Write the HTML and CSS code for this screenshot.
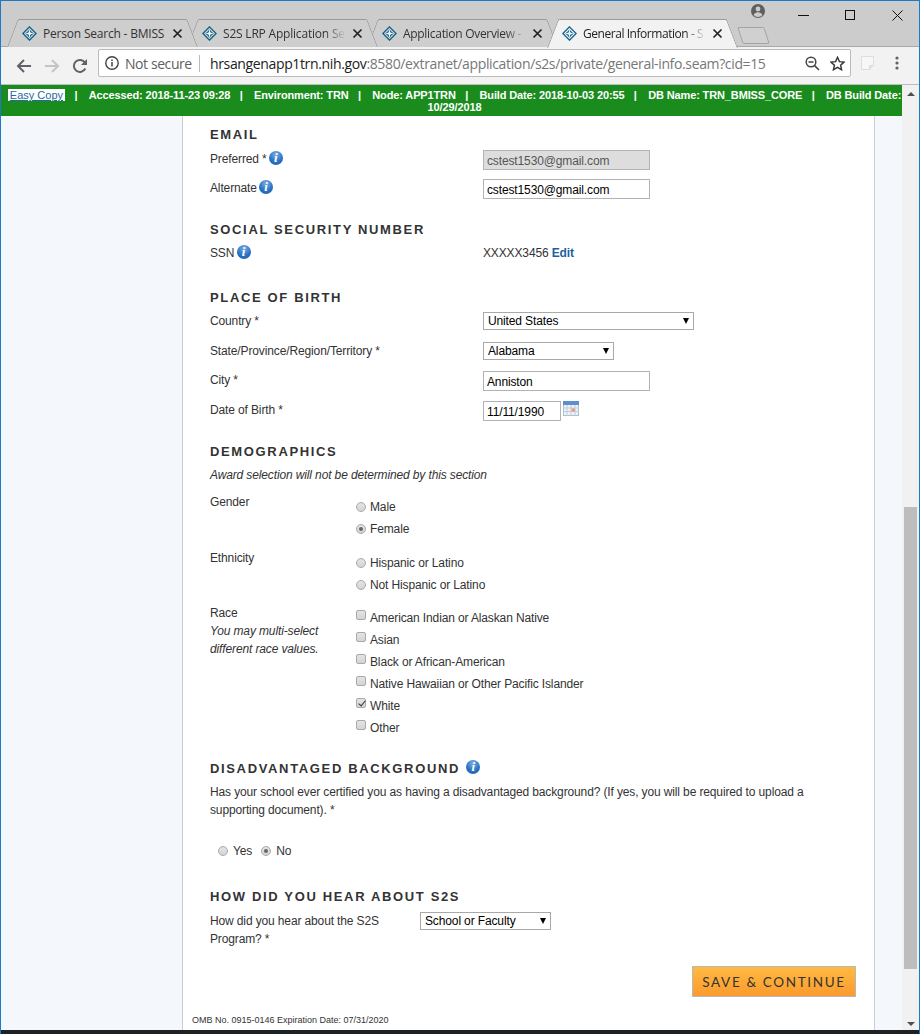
FILE: index.html
```html
<!DOCTYPE html>
<html lang="en">
<head>
<meta charset="utf-8">
<title>General Information - S2S</title>
<link rel="stylesheet" href="styles.css">
</head>
<body>
<svg class="defs" width="0" height="0" aria-hidden="true">
  <symbol id="fav" viewBox="0 0 16 16">
    <path d="M8 .9 15.1 8 8 15.1.9 8Z" fill="none" stroke="#0f5f86" stroke-width="1.4"/>
    <path d="M8 3.6 12.4 8 8 12.4 3.6 8Z" fill="#1a6f96"/>
    <path d="M4.6 8h6.8M8 4.6v6.8" stroke="#fff" stroke-width="1.1"/>
    <path d="M6 6.2 8 8l2-1.8M6 9.8 8 8l2 1.8" fill="none" stroke="#cfe6f0" stroke-width=".8"/>
  </symbol>
  <symbol id="x" viewBox="0 0 11 11">
    <path d="M1.5 1.5l8 8m0-8l-8 8" stroke="#222" stroke-width="1.7" fill="none"/>
  </symbol>
</svg>
<div class="window">
  <header class="tabstrip">
    <div class="tabs">
      <div class="tab"><svg class="fav"><use href="#fav"/></svg><span class="tab-title">Person Search - BMISS</span><svg class="tab-x"><use href="#x"/></svg></div>
      <div class="tab"><svg class="fav"><use href="#fav"/></svg><span class="tab-title fade">S2S LRP Application Se</span><svg class="tab-x"><use href="#x"/></svg></div>
      <div class="tab"><svg class="fav"><use href="#fav"/></svg><span class="tab-title fade">Application Overview -</span><svg class="tab-x"><use href="#x"/></svg></div>
      <div class="tab tab-active"><svg class="fav"><use href="#fav"/></svg><span class="tab-title fade">General Information - S</span><svg class="tab-x"><use href="#x"/></svg></div>
      <div class="newtab"></div>
    </div>
    <div class="winctl">
      <svg class="profile" width="14" height="14" viewBox="0 0 14 14"><circle cx="7" cy="7" r="7" fill="#5f5f5f"/><circle cx="7" cy="5" r="2.4" fill="#ccc"/><path d="M2.6 11c.8-2 2.6-2.8 4.4-2.8s3.6.8 4.4 2.8c-1 1.2-2.6 2-4.4 2s-3.4-.8-4.4-2Z" fill="#ccc"/></svg>
      <svg class="ctl-min" width="11" height="11" viewBox="0 0 11 11"><path d="M0 5.5h11" stroke="#111" stroke-width="1"/></svg>
      <svg class="ctl-max" width="10" height="10" viewBox="0 0 10 10"><rect x=".5" y=".5" width="9" height="9" fill="none" stroke="#111"/></svg>
      <svg class="ctl-close" width="11" height="11" viewBox="0 0 11 11"><path d="M.5.5l10 10m0-10l-10 10" stroke="#111" stroke-width="1" fill="none"/></svg>
    </div>
  </header>

  <div class="toolbar">
    <span class="navbtn"><svg width="16" height="14" viewBox="0 0 16 14"><path d="M15 7H2.5M8 1 2 7l6 6" fill="none" stroke="#5f6368" stroke-width="2"/></svg></span>
    <span class="navbtn"><svg width="16" height="14" viewBox="0 0 16 14"><path d="M1 7h12.5M8 1l6 6-6 6" fill="none" stroke="#c4c4c4" stroke-width="2"/></svg></span>
    <span class="navbtn"><svg width="16" height="16" viewBox="0 0 16 16"><path d="M13.3 10.5A6 6 0 1 1 13 4.8" fill="none" stroke="#5f6368" stroke-width="2"/><path d="M15 1v6H9Z" fill="#5f6368"/></svg></span>
    <div class="omnibox">
      <svg class="omni-info" width="14" height="14" viewBox="0 0 14 14"><circle cx="7" cy="7" r="6.2" fill="none" stroke="#444" stroke-width="1.4"/><path d="M7 6v4.4M7 3.4v1.5" stroke="#444" stroke-width="1.5"/></svg>
      <span class="notsecure">Not secure</span>
      <span class="omni-div"></span>
      <span class="url"><span class="host">hrsangenapp1trn.nih.gov</span>:8580/extranet/application/s2s/private/general-info.seam?cid=15</span>
      <svg class="lens" width="15" height="15" viewBox="0 0 15 15"><circle cx="6" cy="6" r="4.8" fill="none" stroke="#444" stroke-width="1.5"/><path d="M9.6 9.6 14 14M3.5 6h5" stroke="#444" stroke-width="1.5"/></svg>
      <svg class="star" width="15" height="15" viewBox="0 0 15 15"><path d="M7.5 1.3 9.4 5.6l4.7.5-3.5 3.1 1 4.6-4.1-2.4-4.1 2.4 1-4.6L.9 6.1l4.7-.5Z" fill="none" stroke="#333" stroke-width="1.4"/></svg>
    </div>
    <svg class="ext" width="15" height="16" viewBox="0 0 15 16"><path d="M1.5 1.5h12v9l-4 4h-8Z" fill="#f7f7f7" stroke="#ddd"/><path d="M13.5 10.5h-4v4" fill="#e4e4e4" stroke="#ddd"/></svg>
    <svg class="dots" width="4" height="14" viewBox="0 0 4 14"><circle cx="2" cy="2" r="1.6" fill="#5f6368"/><circle cx="2" cy="7" r="1.6" fill="#5f6368"/><circle cx="2" cy="12" r="1.6" fill="#5f6368"/></svg>
  </div>

  <div class="viewport">
    <div class="page">
      <div class="envbar"><a class="easycopy" href="#">Easy Copy</a><span class="sep">|</span>Accessed: 2018-11-23 09:28<span class="sep">|</span>Environment: TRN<span class="sep">|</span>Node: APP1TRN<span class="sep">|</span>Build Date: 2018-10-03 20:55<span class="sep">|</span>DB Name: TRN_BMISS_CORE<span class="sep">|</span>DB Build Date:<br>10/29/2018</div>
      <div class="columns">
        <div class="gutter gutter-left"></div>
        <main class="content">
          <h2 class="title t-email">EMAIL</h2>
          <div class="row r-pref"><label class="lab">Preferred * <i class="info">i</i></label><input class="text text-wide is-disabled" value="cstest1530@gmail.com" disabled></div>
          <div class="row r-alt"><label class="lab">Alternate <i class="info">i</i></label><input class="text text-wide" value="cstest1530@gmail.com"></div>

          <h2 class="title t-ssn">SOCIAL SECURITY NUMBER</h2>
          <div class="row r-ssn"><label class="lab">SSN <i class="info">i</i></label><span class="val">XXXXX3456 <a class="edit" href="#">Edit</a></span></div>

          <h2 class="title t-place">PLACE OF BIRTH</h2>
          <div class="row r-country"><label class="lab">Country *</label><span class="sel sel-country"><select><option>United States</option></select></span></div>
          <div class="row r-state"><label class="lab">State/Province/Region/Territory *</label><span class="sel sel-state"><select><option>Alabama</option></select></span></div>
          <div class="row r-city"><label class="lab">City *</label><input class="text text-wide" value="Anniston"></div>
          <div class="row r-dob"><label class="lab">Date of Birth *</label><input class="text text-date" value="11/11/1990">
            <svg class="cal" width="16" height="15" viewBox="0 0 16 15"><rect x=".5" y=".5" width="15" height="14" fill="#eef3f8" stroke="#a9bdd3"/><rect x="0" y="0" width="16" height="4" fill="#5b8fd0"/><path d="M0 7h16M0 10.5h16M4 4v11M8 4v11M12 4v11" stroke="#c2ccd8"/><rect x="8.5" y="7.5" width="3.5" height="3" fill="#ec9a7c"/></svg>
          </div>

          <h2 class="title t-demo">DEMOGRAPHICS</h2>
          <p class="note">Award selection will not be determined by this section</p>
          <div class="group g-gender">
            <div class="lab-block">Gender</div>
            <div class="opts">
              <label class="opt"><input type="radio" name="g" disabled>Male</label>
              <label class="opt"><input type="radio" name="g" checked disabled>Female</label>
            </div>
          </div>
          <div class="group g-eth">
            <div class="lab-block">Ethnicity</div>
            <div class="opts">
              <label class="opt"><input type="radio" name="e" disabled>Hispanic or Latino</label>
              <label class="opt"><input type="radio" name="e" disabled>Not Hispanic or Latino</label>
            </div>
          </div>
          <div class="group g-race">
            <div class="lab-block">Race<br><em>You may multi-select<br>different race values.</em></div>
            <div class="opts">
              <label class="opt"><input type="checkbox" disabled>American Indian or Alaskan Native</label>
              <label class="opt"><input type="checkbox" disabled>Asian</label>
              <label class="opt"><input type="checkbox" disabled>Black or African-American</label>
              <label class="opt"><input type="checkbox" disabled>Native Hawaiian or Other Pacific Islander</label>
              <label class="opt"><input type="checkbox" checked disabled>White</label>
              <label class="opt"><input type="checkbox" disabled>Other</label>
            </div>
          </div>

          <h2 class="title t-dis">DISADVANTAGED BACKGROUND <i class="info info-title">i</i></h2>
          <p class="para">Has your school ever certified you as having a disadvantaged background? (If yes, you will be required to upload a supporting document). *</p>
          <div class="yesno">
            <label class="opt"><input type="radio" name="d" disabled>Yes</label>
            <label class="opt"><input type="radio" name="d" checked disabled>No</label>
          </div>

          <h2 class="title t-how">HOW DID YOU HEAR ABOUT S2S</h2>
          <div class="row r-how"><label class="lab lab-how">How did you hear about the S2S Program? *</label><span class="sel sel-how"><select><option>School or Faculty</option></select></span></div>

          <div class="actions"><button class="save" type="button">SAVE &amp; CONTINUE</button></div>
          <footer class="omb">OMB No. 0915-0146 Expiration Date: 07/31/2020</footer>
        </main>
        <div class="gutter gutter-right"></div>
      </div>
    </div>
    <div class="scrollbar">
      <span class="arrow arrow-up"></span>
      <div class="thumb"></div>
      <span class="arrow arrow-down"></span>
    </div>
  </div>
  <div class="taskbar"></div>
</div>
</body>
</html>
```
FILE: styles.css
```css
* { box-sizing: border-box; }
html, body { margin: 0; padding: 0; background: #fff; }
.defs { position: absolute; }
body { font-family: "Liberation Sans", Arial, sans-serif; font-size: 12px; color: #333; letter-spacing: -.13px; }

.window {
  width: 920px; height: 1034px; overflow: hidden;
  display: flex; flex-direction: column;
  border: 1px solid #1b7ac6; border-bottom: 0;
  background: #ccc;
}

/* tab strip */
.tabstrip { height: 46px; flex: none; display: flex; background: #ccc; border-bottom: 1px solid #a8a8a8; }
.tabs { display: flex; width: 745px; flex: none; padding: 18px 0 0 6px; height: 46px; }
.tab {
  position: relative; flex: none; width: 191px; height: 28px; margin-right: -11px;
  display: flex; align-items: center; padding-left: 15px;
  font-family: "Open Sans", sans-serif; font-size: 12px; letter-spacing: -.2px; color: #333; isolation: isolate;
}
.tab::before, .tab::after {
  content: ""; position: absolute; top: 0; bottom: 0; width: 55%; z-index: -1;
  background: #cecece; border-top: 1px solid #9a9a9a; transform-origin: bottom;
}
.tab::before { left: 0; border-left: 1px solid #9a9a9a; transform: skewX(-21deg); border-top-left-radius: 2px; }
.tab::after { right: 0; border-right: 1px solid #9a9a9a; transform: skewX(21deg); border-top-right-radius: 2px; }
.tab:nth-child(1) { z-index: 3; }
.tab:nth-child(2) { z-index: 2; }
.tab:nth-child(3) { z-index: 1; }
.tab:nth-child(3) .tab-title { letter-spacing: -.3px; }
.tab-active { z-index: 4; color: #222; height: 29px; letter-spacing: -.45px; }
.tab-active::before, .tab-active::after { background: #f2f2f2; }
.fav { width: 15px; height: 15px; flex: none; margin-right: 6px; }
.tab-title { width: 127px; flex: none; margin-right: 2px; overflow: hidden; white-space: nowrap; }
.fade { -webkit-mask-image: linear-gradient(90deg, #000 102px, transparent 123px); mask-image: linear-gradient(90deg, #000 102px, transparent 123px); }
.tab-x { width: 11px; height: 11px; flex: none; }
.newtab {
  flex: none; width: 27px; height: 17px; margin: 8px 0 0 13px;
  border: 1px solid #a4a4a4; border-radius: 2px; background: #d0d0d0;
  transform: skewX(18deg);
}
.winctl { flex: 1; display: flex; align-items: flex-start; position: relative; }
.profile { margin: 3px 0 0 5px; }
.ctl-min { margin: 9px 0 0 33px; }
.ctl-max { margin: 9px 0 0 36px; }
.ctl-close { margin: 9px 0 0 37px; }

/* toolbar */
.toolbar { height: 38px; flex: none; display: flex; align-items: center; padding-left: 9px; background: #f2f2f2; border-bottom: 1px solid #bdbdbd; }
.navbtn { width: 28px; display: flex; justify-content: center; flex: none; }
.omnibox {
  width: 753px; height: 28px; margin: -5px 0 0 4px; flex: none;
  display: flex; align-items: center; padding-left: 6px;
  background: #fff; border: 1px solid #bbb; border-radius: 2px;
  font-family: "Open Sans", sans-serif; font-size: 14px; color: #777; white-space: nowrap;
}
.notsecure { margin-left: 6px; color: #5f5f5f; letter-spacing: -.42px; width: 70px; }
.omni-div { width: 1px; height: 17px; background: #bbb; margin: 0 10px 0 4px; }
.url { width: 590px; letter-spacing: -.36px; }
.host { color: #222; }
.lens { margin-left: 5px; }
.star { margin-left: 10px; }
.ext { margin: -5px 0 0 9px; }
.dots { margin: -5px 0 0 20px; }

/* viewport */
.viewport { flex: 1; min-height: 0; display: flex; background: #fff; }
.page { width: 901px; flex: none; display: flex; flex-direction: column; }
.envbar {
  flex: none; height: 31px; padding: 4px 0 0 6px; background: #1a8c1e;
  color: #fff; font-weight: bold; font-size: 11px; line-height: 12px; text-align: center; letter-spacing: -.13px;
}
.sep { margin: 0 11.4px 0 9.4px; }
.easycopy { background: #fff; color: #1f6ba5; font-weight: normal; padding: 0 2px; letter-spacing: 0; }
.columns { flex: 1; min-height: 0; display: flex; }
.gutter { background: #f4f8fc; }
.gutter-left { width: 182px; border-right: 1px solid #c9cdd4; }
.gutter-right { width: 28px; border-left: 1px solid #c9cdd4; }
.content { width: 691px; flex: none; padding: 9px 18px 0 27px; display: flex; flex-direction: column; background: #fff; }

.title { margin: 0; height: 18px; font-size: 13px; line-height: 20px; font-weight: bold; letter-spacing: 1.65px; color: #333; }
.t-ssn, .t-demo, .t-dis { margin-top: 21px; }
.t-place { margin-top: 26px; }
.t-demo { margin-top: 21px; }
.t-dis { margin-top: 20px; }
.t-how { margin-top: 27px; }

.row { display: flex; align-items: flex-start; }
.lab { width: 273px; flex: none; line-height: 18px; }
.r-pref { margin-top: 7px; }
.r-alt { margin-top: 9px; }
.r-ssn { margin-top: 6px; }
.r-country { margin-top: 6px; }
.r-state { margin-top: 12px; }
.r-city { margin-top: 11px; }
.r-dob { margin-top: 10px; }
.val { line-height: 18px; }
.edit { color: #1f5f9e; font-weight: bold; text-decoration: none; }

.info {
  display: inline-block; width: 14px; height: 14px; border-radius: 50%; vertical-align: 1px; margin-left: -1px;
  background: radial-gradient(circle at 50% 25%, #7fb0e4, #2a72c4 55%, #1c5fae);
  color: #fff; font: italic bold 13px/14px "Liberation Serif", serif; text-align: center; letter-spacing: 0;
}

.text { height: 20px; border: 1px solid #b3b3b3; padding: 1px 3px 0; font: 12px "Liberation Sans", Arial, sans-serif; letter-spacing: -.13px; color: #000; background: #fff; border-radius: 0; outline: 0; }
.text-wide { width: 167px; }
.text-date { width: 78px; }
.is-disabled { background: #ddd; color: #555; }
.cal { margin-left: 2px; }

.sel { position: relative; display: block; }
.sel select {
  appearance: none; display: block; width: 100%; height: 18px; padding: 0 0 0 4px;
  border: 1px solid #a9a9a9; border-radius: 0; background: #fff;
  font: 12px "Liberation Sans", Arial, sans-serif; letter-spacing: -.13px; color: #000;
}
.sel::after {
  content: ""; position: absolute; right: 5px; top: 6px;
  border-style: solid; border-width: 6px 3.5px 0; border-color: #000 transparent transparent;
}
.sel-country { width: 211px; }
.sel-state { width: 131px; }
.sel-how { width: 131px; }

.note { margin: 6px 0 0; font-style: italic; line-height: 18px; }
.group { display: flex; align-items: flex-start; margin-top: 9px; }
.g-race { margin-top: 8px; }
.lab-block { width: 146px; flex: none; line-height: 18px; }
.opts { padding-top: 3px; display: flex; flex-direction: column; }
.opt { display: flex; align-items: center; height: 22px; }
.opt input {
  appearance: none; margin: 0 4px 0 0; flex: none; width: 10px; height: 10px; position: relative;
  border: 1px solid #a9a9a9; background: linear-gradient(#e4e4e4, #d4d4d4);
}
.opt input[type=radio] { border-radius: 50%; }
.opt input[type=checkbox] { border-radius: 2px; margin-top: -7px; }
.opt input[type=radio]:checked::after {
  content: ""; position: absolute; left: 2px; top: 2px; width: 4px; height: 4px; border-radius: 50%; background: #666;
}
.opt input[type=checkbox]:checked::after {
  content: ""; position: absolute; left: 2.5px; top: 0; width: 3px; height: 6px;
  border: solid #333; border-width: 0 1.6px 1.6px 0; transform: rotate(40deg);
}
.para { margin: 6px 0 0; line-height: 18px; }
.yesno { display: flex; margin: 23px 0 0 8px; height: 18px; align-items: center; gap: 9px; }
.yesno .opt input { margin-right: 5px; }
.lab-how { width: 210px; }
.r-how { margin-top: 7px; }
.info-title { vertical-align: 2px; margin-left: 1px; }
.actions { display: flex; justify-content: flex-end; margin-top: 18px; }
.save {
  width: 164px; height: 31px; padding: 0; border: 1px solid #b8b8b8; border-radius: 0;
  background: linear-gradient(#ffba42, #fb9a2e);
  font: 13.5px "Lato", "Liberation Sans", sans-serif; letter-spacing: 1.65px; color: #333;
}
.omb { margin: 17px 0 0 -18px; font-size: 9px; line-height: 12px; letter-spacing: 0; }

/* scrollbar */
.scrollbar { width: 17px; flex: none; display: flex; flex-direction: column; align-items: center; background: #f1f1f1; }
.arrow { flex: none; width: 0; height: 0; border-style: solid; border-color: transparent; }
.arrow-up { margin-top: 7px; border-width: 0 4px 4px; border-bottom-color: #505050; }
.thumb { width: 13px; height: 462px; margin-top: 411px; background: #bdbdbd; }
.arrow-down { margin-top: 53px; border-width: 4px 4px 0; border-top-color: #505050; }
.taskbar { height: 4px; flex: none; background: #1e2124; }
```
